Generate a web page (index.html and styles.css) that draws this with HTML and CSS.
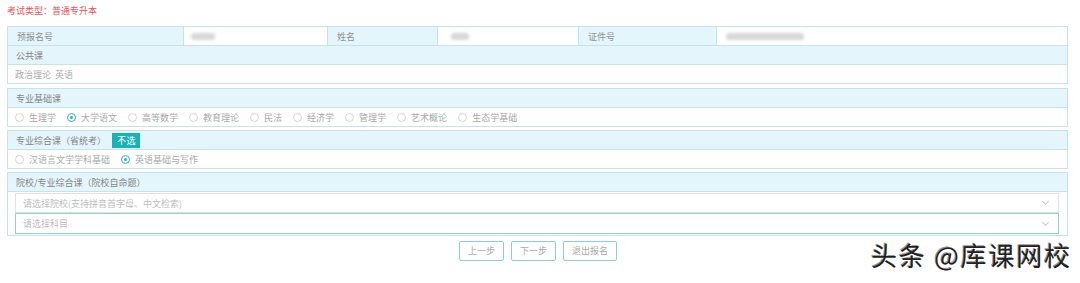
FILE: index.html
```html
<!DOCTYPE html>
<html lang="zh">
<head>
<meta charset="utf-8">
<link rel="stylesheet" href="styles.css">
</head>
<body>
<div class="page">
  <div class="exam-type">考试类型：普通专升本</div>

  <div class="block first">
    <div class="info-row">
      <div class="cell label">预报名号</div>
      <div class="cell value"><span class="blur b1"></span></div>
      <div class="cell label">姓名</div>
      <div class="cell value"><span class="blur b2"></span></div>
      <div class="cell label">证件号</div>
      <div class="cell value last"><span class="blur b3"></span></div>
    </div>
    <div class="sec-head">公共课</div>
    <div class="sec-body">政治理论&nbsp;&nbsp;英语</div>
  </div>

  <div class="block">
    <div class="sec-head">专业基础课</div>
    <div class="sec-body options">
      <label class="opt"><span class="radio"></span>生理学</label>
      <label class="opt"><span class="radio on"></span>大学语文</label>
      <label class="opt"><span class="radio"></span>高等数学</label>
      <label class="opt"><span class="radio"></span>教育理论</label>
      <label class="opt"><span class="radio"></span>民法</label>
      <label class="opt"><span class="radio"></span>经济学</label>
      <label class="opt"><span class="radio"></span>管理学</label>
      <label class="opt"><span class="radio"></span>艺术概论</label>
      <label class="opt"><span class="radio"></span>生态学基础</label>
    </div>
  </div>

  <div class="block">
    <div class="sec-head">专业综合课（省统考）<span class="none-btn">不选</span></div>
    <div class="sec-body options">
      <label class="opt"><span class="radio"></span>汉语言文学学科基础</label>
      <label class="opt"><span class="radio on"></span>英语基础与写作</label>
    </div>
  </div>

  <div class="block">
    <div class="sec-head">院校/专业综合课（院校自命题）</div>
    <div class="selects">
      <div class="select">请选择院校(支持拼音首字母、中文检索)<span class="chev"></span></div>
      <div class="select active">请选择科目<span class="chev"></span></div>
    </div>
  </div>

  <div class="buttons">
    <span class="btn">上一步</span>
    <span class="btn">下一步</span>
    <span class="btn">退出报名</span>
  </div>
</div>
<div class="watermark">头条 @库课网校</div>
</body>
</html>
```

FILE: styles.css
```css
html, body {
  margin: 0;
  padding: 0;
  background: #ffffff;
}
body {
  font-family: "Noto Sans CJK SC", "Noto Sans", sans-serif;
  font-size: 9px;
  color: #999999;
  width: 1080px;
  height: 283px;
  overflow: hidden;
  position: relative;
}
.page {
  padding: 4px 12px 0 7px;
}
.exam-type {
  color: #e8545a;
  height: 22px;
  line-height: 14px;
}
.block {
  border: 1px solid #c6e3ec;
  border-top: 0;
  margin-bottom: 3px;
}
.block.first { margin-bottom: 4px; }
.info-row {
  display: grid;
  grid-template-columns: 176px 144px 110px 141px 138px 1fr;
  height: 18px;
  border-top: 1px solid #c6e3ec;
}
.cell {
  display: flex;
  align-items: center;
  padding-left: 9px;
  border-right: 1px solid #c6e3ec;
  color: #909090;
}
.cell.last { border-right: 0; }
.cell.label { background: #e4f5fc; }
.cell.value { background: #ffffff; padding-left: 7px; }
.blur {
  display: block;
  height: 7px;
  background: #d8d8d8;
  border-radius: 3px;
  filter: blur(1.5px);
}
.b1 { width: 24px; }
.b2 { width: 18px; margin-left: 6px; }
.b3 { width: 78px; margin-left: 2px; }
.sec-head {
  display: flex;
  align-items: center;
  height: 18px;
  padding-left: 8px;
  background: #e4f5fc;
  border-top: 1px solid #c6e3ec;
  color: #858585;
}
.sec-body {
  display: flex;
  align-items: center;
  height: 18px;
  padding-left: 7px;
  border-top: 1px solid #c6e3ec;
  color: #aaaaaa;
}
.options { gap: 11px; }
.opt {
  display: flex;
  align-items: center;
  gap: 5px;
  color: #a8a8a8;
}
.radio {
  width: 9px;
  height: 9px;
  border: 1px solid #d4d4d4;
  border-radius: 50%;
  box-sizing: border-box;
  position: relative;
}
.radio.on {
  border-color: #29b2b8;
}
.radio.on::after {
  content: "";
  position: absolute;
  left: 2px;
  top: 2px;
  width: 3px;
  height: 3px;
  border-radius: 50%;
  background: #29b2b8;
}
.none-btn {
  margin-left: 6px;
  background: #1ab2b4;
  color: #ffffff;
  height: 15px;
  line-height: 15px;
  padding: 0 4px 0 5px;
  font-size: 9px;
  letter-spacing: 0.5px;
}
.selects {
  border-top: 1px solid #c6e3ec;
  padding: 1px 8px 1px 7px;
}
.select {
  display: flex;
  align-items: center;
  height: 18px;
  padding-left: 7px;
  padding-right: 10px;
  border: 1px solid #e2e2e2;
  color: #bcbcbc;
  position: relative;
}
.select.active {
  border-color: #8fcfcf;
  height: 19px;
}
.chev {
  margin-left: auto;
  width: 4px;
  height: 4px;
  border-right: 1px solid #c8c8c8;
  border-bottom: 1px solid #c8c8c8;
  transform: rotate(45deg);
  margin-top: -3px;
}
.buttons {
  display: flex;
  justify-content: center;
  gap: 7px;
  padding-top: 2px;
  padding-left: 1px;
}
.btn {
  height: 18px;
  line-height: 18px;
  padding: 0 8px;
  border: 1px solid #8ccfcf;
  border-radius: 2px;
  color: #ababab;
  font-size: 9px;
}
.watermark {
  position: absolute;
  left: 871px;
  top: 236px;
  font-size: 26px;
  color: #222222;
  font-family: "Noto Sans CJK SC", sans-serif;
  text-shadow: 1px 1px 0 #ffffff, -1px -1px 0 #9a9a9a;
  letter-spacing: 1.8px;
}
```
